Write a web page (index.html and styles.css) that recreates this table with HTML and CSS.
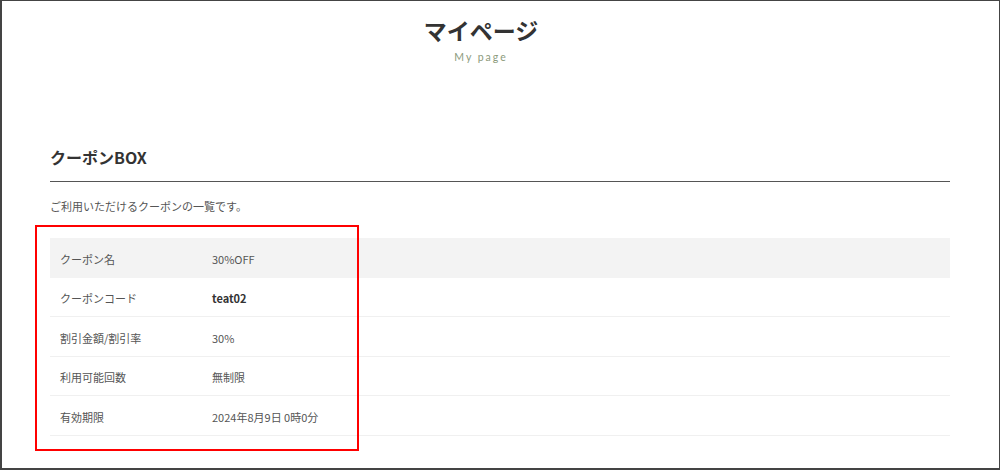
FILE: index.html
```html
<!DOCTYPE html>
<html lang="ja">
<head>
<meta charset="utf-8">
<title>マイページ</title>
<link rel="stylesheet" href="styles.css">
</head>
<body>
<div class="page">
  <header class="page-header">
    <h1 class="page-title">マイページ</h1>
    <p class="page-sub">My page</p>
  </header>
  <section class="coupon">
    <h2 class="coupon-title">クーポンBOX</h2>
    <p class="coupon-desc">ご利用いただけるクーポンの一覧です。</p>
    <div class="coupon-table">
      <div class="row row-head"><div class="label">クーポン名</div><div class="value">30%OFF</div></div>
      <div class="row"><div class="label">クーポンコード</div><div class="value strong">teat02</div></div>
      <div class="row"><div class="label">割引金額/割引率</div><div class="value">30%</div></div>
      <div class="row"><div class="label">利用可能回数</div><div class="value">無制限</div></div>
      <div class="row"><div class="label">有効期限</div><div class="value">2024年8月9日 0時0分</div></div>
    </div>
  </section>
  <div class="highlight"></div>
</div>
</body>
</html>
```
FILE: styles.css
```css
* { box-sizing: border-box; }
html, body {
  margin: 0;
  padding: 0;
  width: 1000px;
  height: 470px;
  overflow: hidden;
  background: #fff;
}
body {
  font-family: "Noto Sans CJK JP", "Noto Sans", sans-serif;
  color: #555;
}
.page {
  position: relative;
  width: 1000px;
  height: 470px;
  border-top: 1px solid #444;
  border-right: 1px solid #444;
  border-bottom: 2px solid #444;
  border-left: 2px solid #444;
  padding: 0 49px 0 48px;
}
.page-header {
  text-align: center;
  padding-top: 11px;
  padding-right: 38px;
}
.page-title {
  margin: 0;
  font-size: 23px;
  line-height: 36px;
  font-weight: 700;
  color: #333;
}
.page-sub {
  margin: 2px 0 0;
  font-family: "Lato", "DejaVu Sans", sans-serif;
  font-size: 10.5px;
  line-height: 14px;
  letter-spacing: 2px;
  color: #8c9a7c;
}
.coupon-title {
  margin: 81px 0 0;
  font-size: 16px;
  line-height: 24px;
  font-weight: 700;
  color: #333;
  padding-bottom: 12px;
  border-bottom: 1px solid #555;
}
.coupon-desc {
  margin: 16px 0 0;
  font-size: 11px;
  line-height: 16px;
  color: #555;
}
.coupon-table {
  margin-top: 24px;
}
.row {
  display: flex;
  align-items: center;
  height: 39.5px;
  padding-top: 3px;
  border-bottom: 1px solid #f0f0f0;
  font-size: 11px;
}
.row-head {
  background: #f3f3f3;
  border-bottom-color: #f3f3f3;
}
.label {
  width: 162px;
  padding-left: 10px;
  color: #555;
}
.value {
  color: #555;
}
.value.strong {
  color: #333;
  font-weight: 700;
}
.highlight {
  position: absolute;
  left: 33px;
  top: 224px;
  width: 324px;
  height: 226px;
  border: 2px solid #f00;
}
```
